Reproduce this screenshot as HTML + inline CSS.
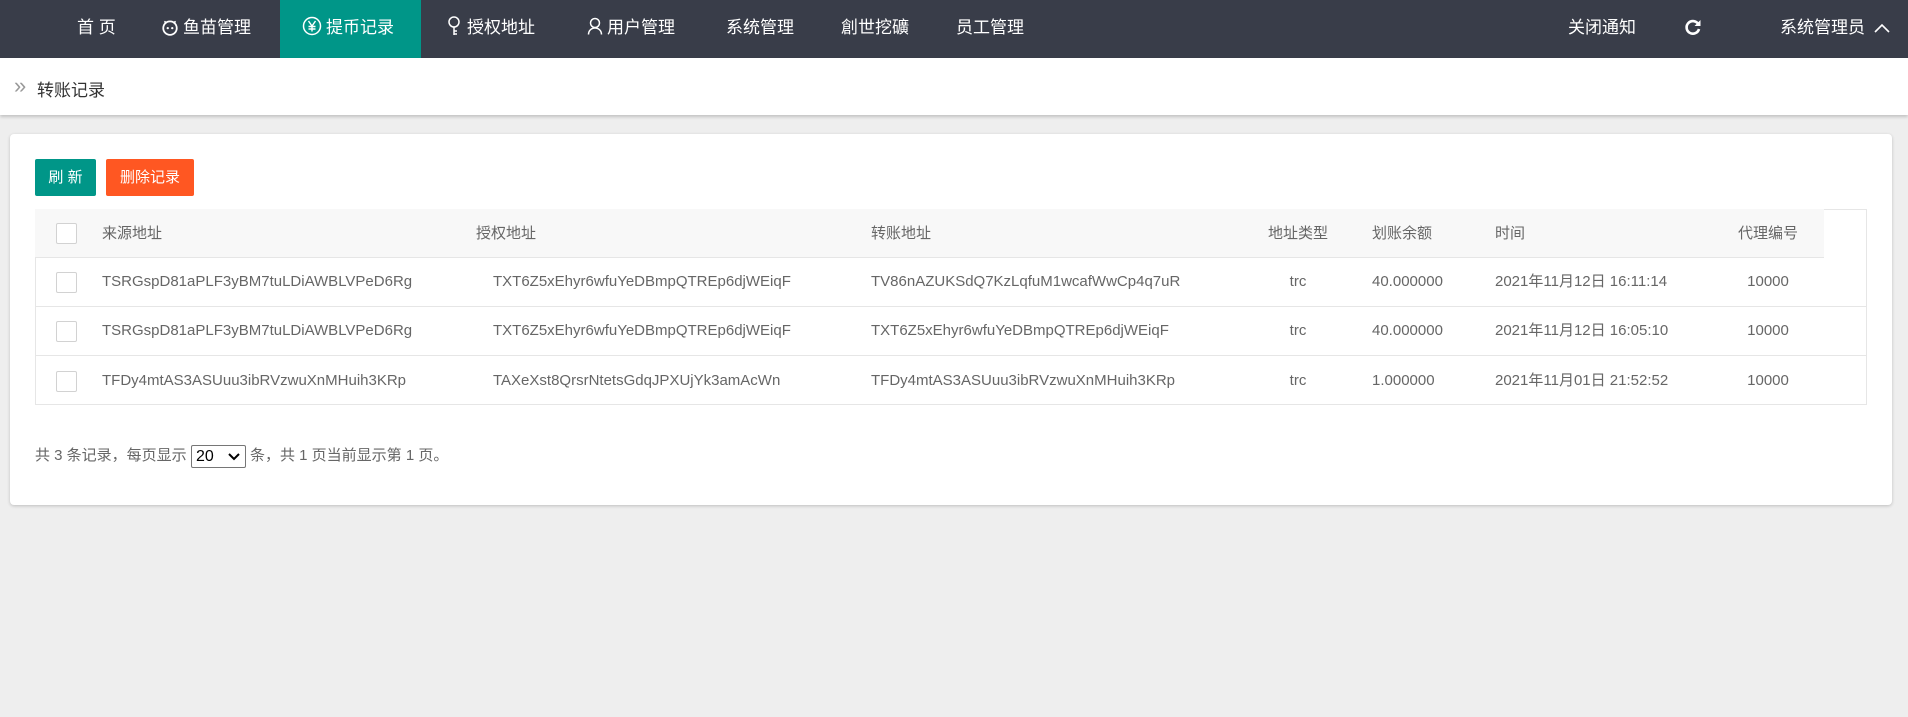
<!DOCTYPE html>
<html><head><meta charset="utf-8"><style>
*{margin:0;padding:0;box-sizing:border-box}
body{width:1908px;height:717px;background:#eeeeee;font-family:"Liberation Sans","Noto Sans CJK SC",sans-serif;position:relative;overflow:hidden}
.nav{position:absolute;left:0;top:0;width:1908px;height:58px;background:#393D49;color:#fff;font-size:17px}
.nav span{position:absolute;top:0;line-height:56px;white-space:nowrap}
.act{position:absolute;left:280px;top:0;width:141px;height:58px;background:#009688}
.bc{position:absolute;left:0;top:58px;width:1908px;height:57px;background:#fff;box-shadow:0 2px 3px rgba(0,0,0,.18);font-size:17px;color:#333}
.card{position:absolute;left:10px;top:134px;width:1882px;height:371px;background:#fff;border-radius:4px;box-shadow:0 1px 3px rgba(0,0,0,.2)}
.btn{position:absolute;top:159px;height:37px;line-height:37px;color:#fff;font-size:15px;text-align:center;border-radius:2px}
.tbl{position:absolute;left:35px;top:209px;width:1832px;height:196px;border:1px solid #e6e6e6}
.hd{position:absolute;left:35px;top:209px;width:1789px;height:49px;background:#f8f8f8;border-bottom:1px solid #e6e6e6}
.line{position:absolute;left:36px;width:1830px;height:1px;background:#e6e6e6}
.t{position:absolute;font-size:15px;color:#666;white-space:nowrap;line-height:20px}
.cb{position:absolute;left:56px;width:21px;height:21px;border:1px solid #d2d2d2;background:#fff;border-radius:2px}
.c{text-align:center;width:100px}
</style></head><body>
<div class="nav">
<div class="act"></div>
<span style="left:77px">首 页</span>
<span style="left:161px"><svg width="18" height="18" viewBox="0 0 16 16" style="vertical-align:-3px;margin-right:4px"><circle cx="8" cy="9" r="6" fill="none" stroke="#fff" stroke-width="1.6"/><path d="M3 3l2 1.5M13 3l-2 1.5" stroke="#fff" stroke-width="1.5"/><circle cx="6" cy="9" r="1" fill="#fff"/><circle cx="10" cy="9" r="1" fill="#fff"/></svg>鱼苗管理</span>
<span style="left:302px"><svg width="20" height="20" viewBox="0 0 20 20" style="vertical-align:-3px;margin-right:4px"><circle cx="10" cy="10" r="8.5" fill="none" stroke="#fff" stroke-width="1.5"/><path d="M6.5 5l3.5 5 3.5-5M10 10v5.5M6.5 10.5h7M6.5 13h7" fill="none" stroke="#fff" stroke-width="1.4"/></svg>提币记录</span>
<span style="left:447px"><svg width="14" height="20" viewBox="0 0 14 20" style="vertical-align:-3px;margin-right:6px"><circle cx="7" cy="6" r="5" fill="none" stroke="#fff" stroke-width="1.5"/><path d="M7 11v8M7 15h3M7 18h3" stroke="#fff" stroke-width="1.5"/></svg>授权地址</span>
<span style="left:587px"><svg width="16" height="18" viewBox="0 0 16 18" style="vertical-align:-2px;margin-right:4px"><circle cx="8" cy="6" r="4.5" fill="none" stroke="#fff" stroke-width="1.5"/><path d="M1.5 17.5c0-4 3-6.5 6.5-6.5s6.5 2.5 6.5 6.5" fill="none" stroke="#fff" stroke-width="1.5"/></svg>用户管理</span>
<span style="left:726px">系统管理</span>
<span style="left:841px">創世挖礦</span>
<span style="left:956px">员工管理</span>
<span style="left:1568px">关闭通知</span>
<span style="left:1684px"><svg width="18" height="18" viewBox="0 0 18 18" style="vertical-align:-3px"><path d="M14.5 6.5A6.3 6.3 0 1 0 15 11" fill="none" stroke="#fff" stroke-width="2.6"/><path d="M16.5 2v6h-6z" fill="#fff"/></svg></span>
<span style="left:1780px">系统管理员</span>
<span style="left:1874px"><svg width="16" height="10" viewBox="0 0 16 10"><path d="M1 9l7-7 7 7" fill="none" stroke="#fff" stroke-width="1.6"/></svg></span>
</div>
<div class="bc"><span style="position:absolute;left:14px;top:14px;color:#999;font-size:22px;line-height:28px">»</span><span style="position:absolute;left:37px;top:18px">转账记录</span></div>
<div class="card"></div>
<div class="btn" style="left:35px;width:61px;background:#009688">刷 新</div>
<div class="btn" style="left:106px;width:88px;background:#FF5722">删除记录</div>
<div class="tbl"></div>
<div class="hd"></div>
<div class="line" style="top:306px"></div>
<div class="line" style="top:355px"></div>
<div class="cb" style="top:223px"></div>
<div class="cb" style="top:272px"></div>
<div class="cb" style="top:321px"></div>
<div class="cb" style="top:371px"></div>
<div class="t" style="left:102px;top:224px">来源地址</div>
<div class="t" style="left:476px;top:224px">授权地址</div>
<div class="t" style="left:871px;top:224px">转账地址</div>
<div class="t c" style="left:1248px;top:224px">地址类型</div>
<div class="t" style="left:1372px;top:224px">划账余额</div>
<div class="t" style="left:1495px;top:224px">时间</div>
<div class="t c" style="left:1718px;top:224px">代理编号</div>

<div class="t" style="left:102px;top:272px">TSRGspD81aPLF3yBM7tuLDiAWBLVPeD6Rg</div>
<div class="t" style="left:493px;top:272px">TXT6Z5xEhyr6wfuYeDBmpQTREp6djWEiqF</div>
<div class="t" style="left:871px;top:272px">TV86nAZUKSdQ7KzLqfuM1wcafWwCp4q7uR</div>
<div class="t c" style="left:1248px;top:272px">trc</div>
<div class="t" style="left:1372px;top:272px">40.000000</div>
<div class="t" style="left:1495px;top:272px">2021年11月12日 16:11:14</div>
<div class="t c" style="left:1718px;top:272px">10000</div>

<div class="t" style="left:102px;top:321px">TSRGspD81aPLF3yBM7tuLDiAWBLVPeD6Rg</div>
<div class="t" style="left:493px;top:321px">TXT6Z5xEhyr6wfuYeDBmpQTREp6djWEiqF</div>
<div class="t" style="left:871px;top:321px">TXT6Z5xEhyr6wfuYeDBmpQTREp6djWEiqF</div>
<div class="t c" style="left:1248px;top:321px">trc</div>
<div class="t" style="left:1372px;top:321px">40.000000</div>
<div class="t" style="left:1495px;top:321px">2021年11月12日 16:05:10</div>
<div class="t c" style="left:1718px;top:321px">10000</div>

<div class="t" style="left:102px;top:371px">TFDy4mtAS3ASUuu3ibRVzwuXnMHuih3KRp</div>
<div class="t" style="left:493px;top:371px">TAXeXst8QrsrNtetsGdqJPXUjYk3amAcWn</div>
<div class="t" style="left:871px;top:371px">TFDy4mtAS3ASUuu3ibRVzwuXnMHuih3KRp</div>
<div class="t c" style="left:1248px;top:371px">trc</div>
<div class="t" style="left:1372px;top:371px">1.000000</div>
<div class="t" style="left:1495px;top:371px">2021年11月01日 21:52:52</div>
<div class="t c" style="left:1718px;top:371px">10000</div>

<div class="t" style="left:35px;top:446px">共 3 条记录，每页显示</div>
<div style="position:absolute;left:191px;top:445px;width:55px;height:23px;border:1px solid #767676;border-radius:2px;background:#fff;font-size:16px;line-height:21px;padding-left:4px;color:#000">20<svg width="12" height="8" viewBox="0 0 12 8" style="position:absolute;right:5px;top:7px"><path d="M1 1l5 5 5-5" fill="none" stroke="#000" stroke-width="2"/></svg></div>
<div class="t" style="left:250px;top:446px">条，共 1 页当前显示第 1 页。</div>
</body></html>
